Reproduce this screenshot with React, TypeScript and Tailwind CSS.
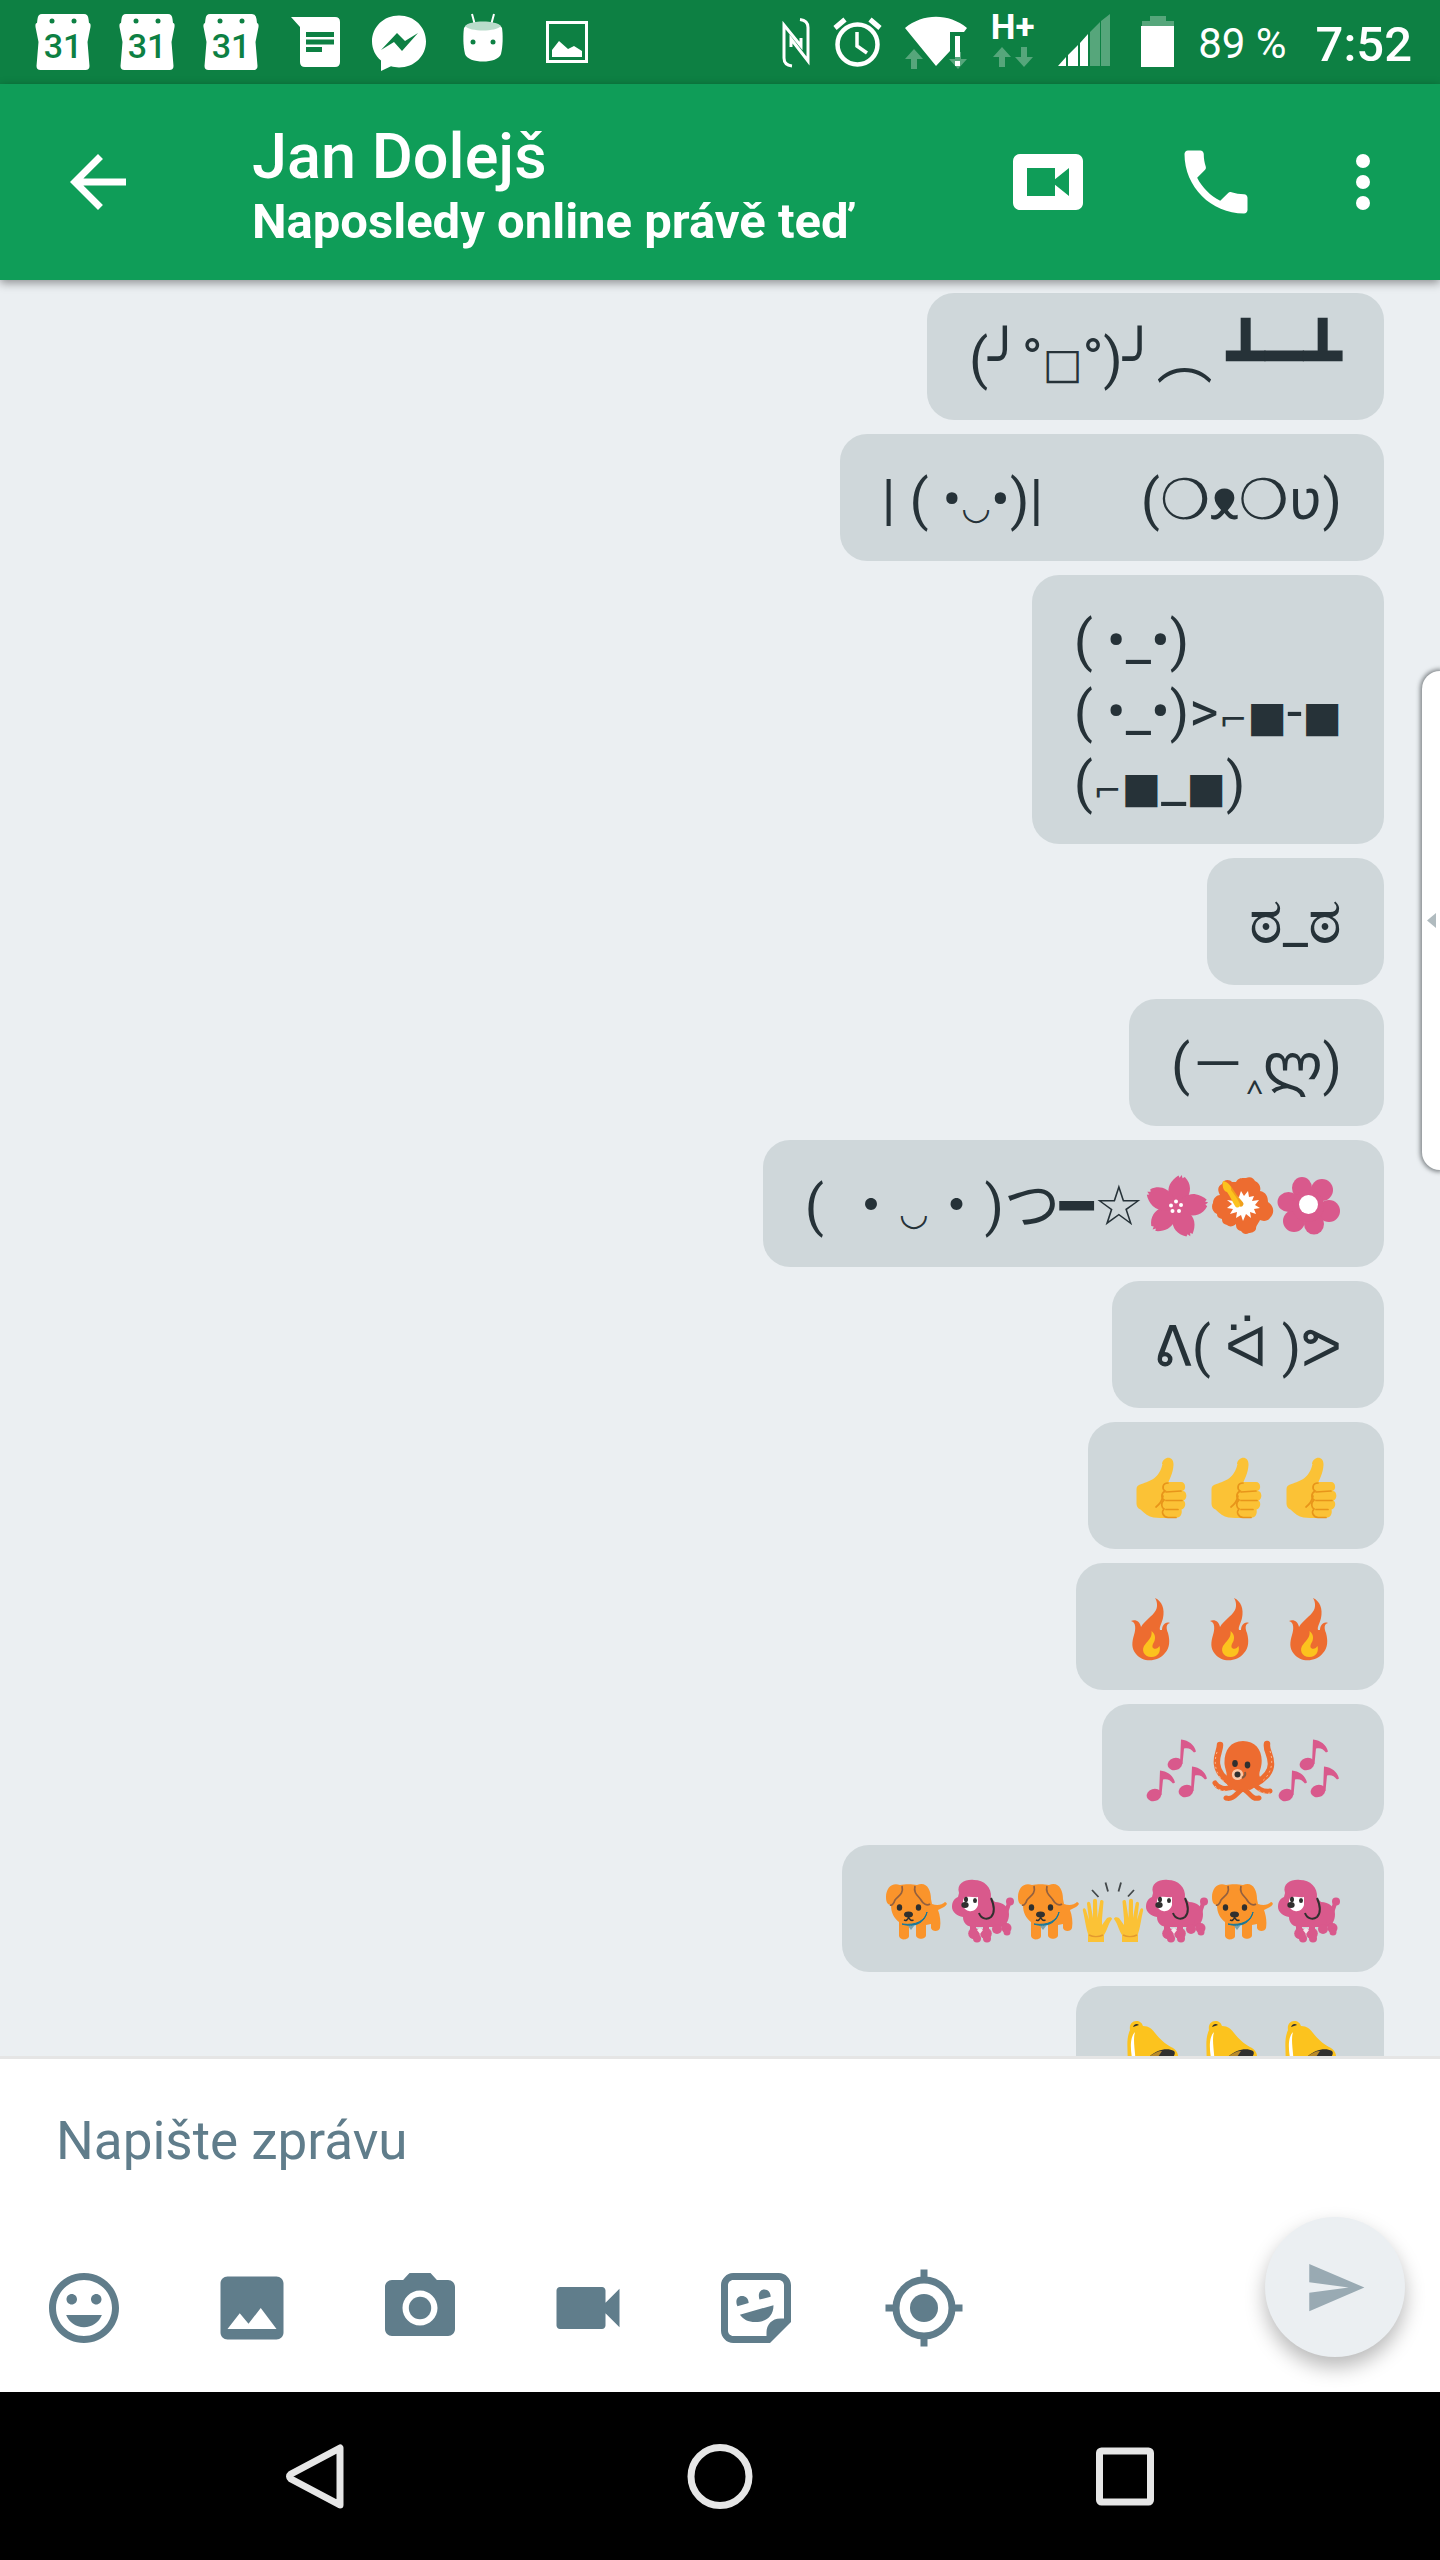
import type { ReactNode } from "react";

type GlyphProps = { label: string; children: ReactNode };

/* ---------- Emoji drawings ---------- */

function Emoji({ label, children }: GlyphProps) {
  return (
    <svg role="img" aria-label={label} viewBox="0 3 66 71" className="h-[71px] w-[66px] shrink-0 overflow-visible">
      {children}
    </svg>
  );
}

function HandEmoji({ label, children }: GlyphProps) {
  return (
    <svg role="img" aria-label={label} viewBox="0 3 62 71" className="h-[71px] w-[62px] shrink-0 overflow-visible">
      {children}
    </svg>
  );
}

function CherryBlossom() {
  return (
    <Emoji label="🌸">
      <g transform="translate(32 39)">
        {[10, 82, 154, 226, 298].map((a) => (
          <path
            key={a}
            transform={`rotate(${a})`}
            fill="#d9598c"
            d="M0 2C-8-4-12-14-10-21c1-4 4-8 7-10.500l1.500 2 1.500-3 1.500 3 2-1.500c4 3 6 6 7 10C12-14 8-4 0 2z"
          />
        ))}
      </g>
      <g fill="#fff">
        <circle cx="27" cy="37.500" r="2" />
        <circle cx="32" cy="33.500" r="2" />
        <circle cx="37" cy="37" r="2" />
        <circle cx="28.500" cy="43" r="2" />
        <circle cx="35" cy="43" r="2" />
      </g>
    </Emoji>
  );
}

function Hibiscus() {
  return (
    <Emoji label="🌺">
      <path
        fill="#ed6c30"
        d="M26 14c2-5 8-4 10-4 5-2 8 1 9 3 5 2 6 7 5 10 6 1 8 6 8 11 6 4 7 11 2 16-3 4-8 3-10 2-1 3-4 5-4 9-1 3-5 4-7 4-3 2-6 1-8-2-5-1-5-5-5-7-3 3-7 3-9 1-4-1-5-3-5-6-4-1-5-3-5-5-5-2-6-8-4-11 0-5 4-8 7-8-3-5-2-9 2-11 1-5 8-5 10-2h4z"
      />
      <path
        fill="#fff"
        d="M31 23l3 5 4-5 1 6 5-1-2 5 7-1-4 5 5 3-6 1 2 5-6-2 1 6-5-4-3 7-2-6-5 3 1-6-7 2 3-5-6-1 5-4-5-4 7 1-2-5 7 1z"
      />
      <path d="M19 20l6 9 6 7" fill="none" stroke="#f0a01c" strokeWidth="5" strokeLinecap="round" />
      <path d="M13 13c-1 4 0 10 4 11 3 4 5 9 8 14 2 3 6 1 5-2-3-6-6-10-9-14 1-4-3-8-8-9z" fill="#fcc31e" />
    </Emoji>
  );
}

function Blossom() {
  return (
    <Emoji label="🌼">
      <g fill="#d9598c">
        <ellipse cx="26" cy="20" rx="10" ry="11" />
        <ellipse cx="46" cy="22" rx="11" ry="11" />
        <ellipse cx="53" cy="43" rx="11" ry="11" />
        <ellipse cx="38" cy="56" rx="10" ry="10.500" />
        <ellipse cx="18" cy="53" rx="11" ry="11" />
        <ellipse cx="12.500" cy="34" rx="11" ry="10" />
        <circle cx="32" cy="38" r="16" />
      </g>
      <circle cx="32.500" cy="36.500" r="9.500" fill="#fff" />
    </Emoji>
  );
}

function ThumbsUp() {
  return (
    <HandEmoji label="👍">
      <path
        fill="#fbc236"
        d="M32 14c1-8 12-9 11.500 1C43 23 40 28 38.500 32H51c5 0 5.500 8 1.500 9 5 0 5 8.500 1 9.500 3 2 2 8-2 9 1 4-1 8-4 8-8 1-16 .500-24 0-5-1-9-4-13-8-3-1-4-4-4-6V39c0-3 2-4 5-5 9-3 18-6 21-20z"
      />
      <g fill="none" stroke="#e8951a" strokeWidth="1.700" strokeLinecap="round">
        <path d="M38 33c-6 0-6 6-3 8-5 3-3 8-1 9-4 3-2 8 0 9-3 3-1 8 4 8.500h8" />
        <path d="M36 42l15-1M36 50.500h16M36 59.500h12M33 46c-1 5-3 8-7 11" />
      </g>
    </HandEmoji>
  );
}

function Fire() {
  return (
    <Emoji label="🔥">
      <path
        fill="#ed6c30"
        d="M37 7c7 3 10 11 8 20-1 5-4 9-3 12h2c0-4 3-9 8-7-4 1-4 5-2 10 2 7 2 15-3 20-7 9-22 10-29 1-5-6-4-12-2-19 2-6 2-13-3-14 5-2 9 1 10 6 4-7 11-10 15-17 2-4 1-9-1-12z"
      />
      <path
        fill="#fcc31e"
        d="M33.500 40c4 3 4 7 3 10-1 2-3 5-1.500 7 3 2 5 0 6.500-2 1.500 5-1 11-8 11-8 0-11-8-6-13 3-4 7-7 6-13z"
      />
    </Emoji>
  );
}

function Notes() {
  return (
    <Emoji label="🎶">
      <g fill="#d9598c">
        {["translate(31 32)", "translate(10 63)", "translate(42 59)"].map((t) => (
          <g key={t} transform={t}>
            <ellipse rx="7.500" ry="6" transform="rotate(-18)" />
            <path d="M5 0L6-24.500c8 1 13 5 15 12l-2 1c-3-4-6-5-10-4L7.500 0z" />
          </g>
        ))}
      </g>
    </Emoji>
  );
}

function Octopus() {
  return (
    <Emoji label="🐙">
      <g fill="none" stroke="#ed6c30" strokeLinecap="round" strokeWidth="6.500">
        <path d="M10 13c0 6-4 10-3 19 1 9 7 15 16 20M57 12c-1 7 4 10 4 20 0 9-7 15-16 20" />
        <path d="M5 51c3 5 10 8 20 3M60 59c-6 1-11-1-16-7M16 66c7 2 10-4 15-8M49 66c-7 2-9-5-14-8" strokeWidth="5" />
      </g>
      <path
        fill="#ed6c30"
        d="M33 9c13 0 20 10 18.500 23-.5 6-3.500 9-1.500 13 1 6-4 10-10 13l-7-1-7 2c-7-3-12-8-10-13 2-5-1-8-1.500-14C14 19 20 9 33 9z"
      />
      <g fill="none" stroke="#fbb68f" strokeWidth="1" strokeDasharray="2 3">
        <path d="M7 20c-4 12-1 24 9 31M60 19c4 12 1 24-9 31M5 54c3 4 8 5 14 5M60 61c-4 1-8 0-12-3" />
      </g>
      <g fill="#30302f">
        <ellipse cx="25" cy="31.500" rx="2.800" ry="3.400" />
        <ellipse cx="37.500" cy="33" rx="2.800" ry="3.400" />
      </g>
      <circle cx="27.500" cy="42.500" r="5.600" fill="#fbc8a8" />
      <circle cx="27.500" cy="42.500" r="3" fill="#30302f" />
      <path d="M35 40c1 3-1 5-3 6" stroke="#85593f" strokeWidth="2" fill="none" />
    </Emoji>
  );
}

function Dog() {
  return (
    <Emoji label="🐕">
      <path
        fill="#fa942b"
        d="M2 24C2 15 8 9 16 12c5-1 12-1 17 0 9-4 14 4 14 14l1 5c5 2 10 1 13-2 3 1 2 3-1 5l-6 3c2 5 3 12 2 18-1 4-8 4-9 0v-4l-5 1v10c0 5-10 5-10 0V52h-7v11c0 4-9 5-10 0V49c-5-4-8-9-8-17-4 0-5-4-5-8z"
      />
      <g fill="none" stroke="#93603f" strokeWidth="1.700">
        <path d="M18 13c2 8-4 10-7 14-1 3-3 6-5 5M31 13c-2 8 4 10 6 14 2 4 6 6 9 4" />
      </g>
      <path d="M18 51c12 4 23-1 25-12-2 8-10 14-25 12z" fill="#15789c" stroke="#15789c" strokeWidth="1" />
      <path d="M24 53h6l-3 4z" fill="#7da0a8" />
      <g fill="#30302f">
        <ellipse cx="15.500" cy="34.500" rx="2.700" ry="3.300" />
        <ellipse cx="34.500" cy="34.500" rx="2.700" ry="3.300" />
        <ellipse cx="24.500" cy="41.500" rx="4.500" ry="3" />
      </g>
      <path d="M20 47c2 1 4 0 4.500-3 1 3 3 4 5 3" fill="none" stroke="#30302f" strokeWidth="1.500" />
    </Emoji>
  );
}

function Poodle() {
  return (
    <Emoji label="🐩">
      <g fill="#d9598c">
        <path d="M9 20C6 10 16 6 24 7c10 0 18 7 17 18l4 4c8 0 14 5 14 12 0 7-3 11-8 13H24c-7 0-11-4-11-10-6-1-11-5-11-10 0-6 3-9 6-10z" />
        <circle cx="60" cy="28.500" r="4" />
        <path d="M57 30l-3 8 4 2 3-9zM20 52h6v7h-6zM33 52h6v7h-6zM43 50h6v6h-6zM50 46h6l1 8h-5z" />
        <circle cx="24" cy="60.500" r="5.800" />
        <circle cx="36" cy="60.500" r="5.800" />
        <circle cx="27" cy="65.500" r="4" />
        <circle cx="37" cy="65.500" r="4" />
        <circle cx="47" cy="56" r="5" />
        <circle cx="56.500" cy="55" r="5" />
        <circle cx="57" cy="59" r="3.500" />
      </g>
      <path d="M30 55l-3 2 3 4 3-4z" fill="#f3e5ea" />
      <path d="M14 25c5-3 9 0 14-1v8c-1 4-5 7-9 6-5-1-8-6-5-13z" fill="#fff" />
      <g fill="#30302f">
        <ellipse cx="16" cy="26.500" rx="2" ry="2.800" />
        <ellipse cx="25" cy="27.500" rx="2" ry="2.500" />
        <ellipse cx="15" cy="32" rx="3.700" ry="3" />
      </g>
      <path d="M41 25c3 7 5 14 0 19-4 3-10 2-12-4" fill="none" stroke="#30302f" strokeWidth="2" />
    </Emoji>
  );
}

function RaisedHands() {
  const hand =
    "M6 69V61C4 55 3 47 1 38c-1-3 2-4 3-1l3 10-2-16c0-3 3-3 3.500 0L11 45V28c0-3 4-3 4 0l.500 17L18 29c0-3 4-2 3.500 0L20 46v6l5-7c2-1 5-1 5 1-4 5-5 12-8 16v7z";
  return (
    <HandEmoji label="🙌">
      <g fill="#fbc236">
        <path d={hand} />
        <path d={hand} transform="translate(62 0) scale(-1 1)" />
      </g>
      <path d="M7 62c4 2 10 2 14 0M41 62c4 2 10 2 14 0" stroke="#e39a2e" strokeWidth="1.500" fill="none" />
      <path d="M10 17l6.500 7M23.500 9.500l2.500 9M39 9.500l-2.500 9M52 17l-6 6.500" stroke="#43484a" strokeWidth="1.800" />
    </HandEmoji>
  );
}

function Bell() {
  return (
    <Emoji label="🔔">
      <path
        fill="#fcc31e"
        d="M12 16c-1-5 2-9 6-9s6 2 7 5c6 0 9 3 12 7 5 6 9 10 16 14 7 3 9 10 5 14-10 10-24 14-42 13-7-1-8-6-7-12 2-9-2-21 3-32z"
      />
      <path d="M17 18c-6 6-5 22 0 38 2-14-3-28 0-38z" fill="#fff" />
      <path d="M32 42c7-6 17-9 24-5 2 2 0 6-3 8-8 6-18 9-29 8z" fill="#30302f" />
      <path d="M32 42c4-3 8-5 12-5l-4 6z" fill="#b98a2a" />
      <path d="M15 13c1-3 4-4 6-2z" fill="#30302f" />
    </Emoji>
  );
}

/* ---------- Icons ---------- */

function MaterialIcon({ children, className = "size-[84px]" }: { children: ReactNode; className?: string }) {
  return (
    <svg viewBox="0 0 24 24" fill="currentColor" className={className} aria-hidden="true">
      {children}
    </svg>
  );
}

function StatusCell({ children }: { children: ReactNode }) {
  return (
    <svg viewBox="0 0 84 84" className="size-[84px] shrink-0 fill-white" aria-hidden="true">
      {children}
    </svg>
  );
}

function CalendarCell() {
  return (
    <StatusCell>
      <path d="M21 14h42q4 0 4.500 5l.500 4q2 0 1.500 4l-3 15 2 24q0 4-4 4h-45q-4 0-4-4l2-24-3-15q-.500-4 1.500-4l.500-4q.500-5 4.500-5z" />
      <circle cx="31" cy="21" r="2.500" fill="#0d8043" />
      <circle cx="53" cy="21" r="2.500" fill="#0d8043" />
      <text x="42" y="58" textAnchor="middle" fontSize="34" fontWeight="500" fill="#0d8043">
        31
      </text>
    </StatusCell>
  );
}

function StatusBar() {
  return (
    <div className="flex h-[84px] shrink-0 items-center justify-between bg-[#0d8043] pl-[21px] pr-7 text-white">
      <div className="flex">
        <CalendarCell />
        <CalendarCell />
        <CalendarCell />
        <StatusCell>
          <path d="M18 17h44q5 0 5 5v40q0 5-5 5H32q-5 0-5-5V27z" />
          <path d="M33 32h28v5H33zM33 39.500h28v5H33zM33 47h16v5H33z" fill="#0d8043" />
        </StatusCell>
        <StatusCell>
          <path d="M42 15.500c15.500 0 27 11.500 27 26s-11.500 26-27 26c-3 0-5.500-.5-8-1.200L24 71V60.500c-5.500-4.500-9-11.500-9-19 0-14.500 11.500-26 27-26z" />
          <path d="M24 50l16-17 8 8 13-8-16 18-8-9z" fill="#0d8043" />
        </StatusCell>
        <StatusCell>
          <path d="M31 14l3 11M53 14l-3 11" stroke="#fff" strokeWidth="2" />
          <path d="M23 28c4-8 34-8 38 0 1 7 1 18-1 26-3 10-33 10-36 0-2-8-2-19-1-26z" />
          <path d="M24 26c5-6 31-6 36 0-5 6-31 6-36 0z" fill="#b9dccb" />
          <circle cx="32" cy="42" r="2.500" fill="#0d8043" />
          <circle cx="52" cy="42" r="2.500" fill="#0d8043" />
        </StatusCell>
        <StatusCell>
          <path fillRule="evenodd" d="M21 21h42v42H21zM24 24v36h36V24z" />
          <path d="M27 50l7-9 9 8 6-3 8 5v6H27z" />
        </StatusCell>
      </div>

      <div className="flex items-center gap-[23px]">
        <svg viewBox="0 0 28 84" className="h-[84px] w-7" fill="none" stroke="#fff" strokeWidth="3" aria-hidden="true">
          <path d="M10 66q-8-1-8-8V25l17 21v-8M18 19.500q8 1 8 8V61L9 39v8" />
        </svg>
        <svg viewBox="0 0 49 84" className="h-[84px] w-[49px]" fill="none" stroke="#fff" aria-hidden="true">
          <circle cx="24.500" cy="44.500" r="20" strokeWidth="4.500" />
          <path d="M24 32v14l10 7" strokeWidth="3.500" />
          <path d="M2 28l10-8.500M47 28l-10-8.500" strokeWidth="5" />
        </svg>
        <svg viewBox="0 0 62 84" className="h-[84px] w-[62px]" fill="#fff" aria-hidden="true">
          <path d="M9 49l9 10h-6v10H6V59H0zM53 69l9-10h-6V52h-6v7h-6z" fill="#56a67b" />
          <path d="M0 28C18 13 44 13 62 28l-3 4H45v19L31 66z" />
          <path d="M50 36h5v21h-5zM50 61h5v5h-5z" />
        </svg>
        <div className="flex w-[45px] flex-col items-center gap-1 pb-1">
          <span className="text-[35px] font-bold leading-[30px]">H+</span>
          <svg viewBox="0 0 42 20" className="h-5 w-[42px] fill-[#56a67b]" aria-hidden="true">
            <path d="M10 0l9 10h-6v10H7V10H1zM32 20l9-10h-6V0h-6v10h-6z" />
          </svg>
        </div>
        <svg viewBox="0 0 52 84" className="h-[84px] w-[52px]" fill="#fff" aria-hidden="true">
          <path d="M0 66l8-9v9zM10 66V55l10-10v21zM22 66V43l8-9v32z" />
          <path d="M32 66V32l10-10v44zM43 66V21l9-7v52z" fill="#56a67b" />
        </svg>
        <svg viewBox="0 0 42 84" className="h-[84px] w-[42px]" fill="#fff" aria-hidden="true">
          <path d="M17 16h16v5h8v6H9v-6h8z" fill="#56a67b" />
          <path d="M8 26h33v41H8z" />
        </svg>
        <span className="pt-1 text-[42px] leading-none">89 %</span>
        <span className="pl-1.5 pt-1 text-[49px] font-medium leading-none">7:52</span>
      </div>
    </div>
  );
}

function AppBar() {
  return (
    <header className="relative z-10 flex h-[196px] shrink-0 items-center bg-[#0f9d58] pl-14 pr-[35px] text-white shadow-[0_3px_9px_rgba(0,0,0,0.4)]">
      <button type="button" aria-label="Zpět">
        <MaterialIcon>
          <path d="M20 11H7.830l5.590-5.590L12 4l-8 8 8 8 1.410-1.410L7.830 13H20v-2z" />
        </MaterialIcon>
      </button>
      <div className="min-w-0 flex-1 pl-28 pt-1.5">
        <h1 className="truncate text-[63px] font-medium leading-[74px]">Jan Dolejš</h1>
        <p className="truncate text-[49px] font-bold leading-[56px]">Naposledy online právě teď</p>
      </div>
      <div className="flex shrink-0">
        <button type="button" aria-label="Videohovor" className="mr-[84px]">
          <MaterialIcon>
            <path d="M20 4H4c-1.100 0-2 .9-2 2v12c0 1.100.9 2 2 2h16c1.100 0 2-.9 2-2V6c0-1.100-.9-2-2-2zm-2 12l-4-3.200V16H6V8h8v3.200L18 8v8z" />
          </MaterialIcon>
        </button>
        <button type="button" aria-label="Zavolat" className="mr-[63px]">
          <MaterialIcon>
            <path d="M6.620 10.790c1.440 2.830 3.760 5.140 6.590 6.590l2.200-2.200c.27-.27.67-.36 1.020-.24 1.120.37 2.330.57 3.570.57.55 0 1 .45 1 1V20c0 .55-.45 1-1 1-9.390 0-17-7.610-17-17 0-.55.45-1 1-1h3.500c.55 0 1 .45 1 1 0 1.250.2 2.450.57 3.570.11.35.03.74-.25 1.020l-2.200 2.200z" />
          </MaterialIcon>
        </button>
        <button type="button" aria-label="Další možnosti">
          <MaterialIcon>
            <circle cx="12" cy="6" r="2" />
            <circle cx="12" cy="12" r="2" />
            <circle cx="12" cy="18" r="2" />
          </MaterialIcon>
        </button>
      </div>
    </header>
  );
}

/* ---------- Conversation ---------- */

function Bubble({ children }: { children: ReactNode }) {
  return (
    <li className="flex shrink-0 whitespace-pre rounded-[27px] bg-[#cfd7da] px-[42px] pb-[25px] pt-[31px] text-[56px] leading-[71px] text-[#263238]">
      {children}
    </li>
  );
}

function Spaced({ children }: { children: ReactNode }) {
  return <div className="flex gap-[13px]">{children}</div>;
}

/* Symbols whose size differs from the letters around them. */
function Tiny({ children }: { children: ReactNode }) {
  return <span className="text-[34px] leading-none">{children}</span>;
}

function Small({ children }: { children: ReactNode }) {
  return <span className="text-[42px] leading-none">{children}</span>;
}

function Large({ children }: { children: ReactNode }) {
  return <span className="text-[64px] leading-none">{children}</span>;
}

function Conversation() {
  return (
    <main className="relative min-h-0 flex-1 overflow-hidden bg-[#ebeff2]">
      <ul className="flex flex-col items-end gap-3.5 pr-14 pt-[13px]">
        <Bubble>
          <p>
            (╯°<Small>□</Small>°)╯︵ <Large>┻━┻</Large>
          </p>
        </Bubble>
        <Bubble>
          <p>
            | ( •<Tiny>◡</Tiny>
            •)|{"\u3000   "}(❍ᴥ❍ʋ)
          </p>
        </Bubble>
        <Bubble>
          <p>
            {"( •_•)\n( •_•)>"}
            <Tiny>⌐</Tiny>
            <Small>■</Small>-<Small>■</Small>
            {"\n("}
            <Tiny>⌐</Tiny>
            <Small>■</Small>_<Small>■</Small>)
          </p>
        </Bubble>
        <Bubble>
          <p>
            <Large>ಠ</Large>_<Large>ಠ</Large>
          </p>
        </Bubble>
        <Bubble>
          <p>
            (－<Small>‸</Small>ლ)
          </p>
        </Bubble>
        <Bubble>
          <p>
            ({"\u2004"}・<Tiny>◡</Tiny>
            ・)つ━☆
          </p>
          <CherryBlossom />
          <Hibiscus />
          <Blossom />
        </Bubble>
        <Bubble>ᕕ( ᐛ )ᕗ</Bubble>
        <Bubble>
          <Spaced>
            <ThumbsUp />
            <ThumbsUp />
            <ThumbsUp />
          </Spaced>
        </Bubble>
        <Bubble>
          <Spaced>
            <Fire />
            <Fire />
            <Fire />
          </Spaced>
        </Bubble>
        <Bubble>
          <Notes />
          <Octopus />
          <Notes />
        </Bubble>
        <Bubble>
          <Dog />
          <Poodle />
          <Dog />
          <RaisedHands />
          <Poodle />
          <Dog />
          <Poodle />
        </Bubble>
        <Bubble>
          <Spaced>
            <Bell />
            <Bell />
            <Bell />
          </Spaced>
        </Bubble>
      </ul>
      <button
        type="button"
        aria-label="Otevřít panel"
        className="absolute right-0 top-[391px] flex h-[499px] w-[18px] items-center justify-end rounded-l-[18px] bg-white pr-1 shadow-[0_0_4px_2px_rgba(60,66,70,0.6)]"
      >
        <svg viewBox="0 0 9 15" className="h-[15px] w-[9px] shrink-0 fill-[#b0bbbf]" aria-hidden="true">
          <path d="M0 7.500L9 0v15z" />
        </svg>
      </button>
    </main>
  );
}

/* ---------- Composer ---------- */

function Composer() {
  return (
    <form
      className="flex shrink-0 flex-col border-t-[3px] border-[#e5e5e5] bg-white pt-[46px] text-[#607d8b]"
      onSubmit={(e) => e.preventDefault()}
    >
      <input
        type="text"
        aria-label="Napište zprávu"
        placeholder="Napište zprávu"
        className="mx-14 h-[72px] text-[53px] leading-[72px] outline-none placeholder:text-[#607d8b] placeholder:opacity-100"
      />
      <div className="flex items-start justify-between pb-[35px] pl-[42px] pr-[35px] pt-10">
        <div className="flex gap-[84px] pt-[49px]">
          <button type="button" aria-label="Emoji">
            <MaterialIcon>
              <path d="M11.990 2C6.470 2 2 6.480 2 12s4.470 10 9.990 10C17.520 22 22 17.520 22 12S17.520 2 11.990 2zM12 20c-4.420 0-8-3.580-8-8s3.580-8 8-8 8 3.580 8 8-3.580 8-8 8zm3.500-9c.83 0 1.500-.67 1.500-1.500S16.330 8 15.500 8 14 8.670 14 9.500s.67 1.500 1.500 1.500zm-7 0c.83 0 1.500-.67 1.500-1.500S9.330 8 8.500 8 7 8.670 7 9.500 7.670 11 8.500 11zM12 17.500c2.330 0 4.310-1.460 5.110-3.500H6.890c.8 2.040 2.780 3.500 5.110 3.500z" />
            </MaterialIcon>
          </button>
          <button type="button" aria-label="Obrázek">
            <MaterialIcon>
              <path
                fillRule="evenodd"
                d="M5 3h14c1.100 0 2 .9 2 2v14c0 1.100-.9 2-2 2H5c-1.100 0-2-.9-2-2V5c0-1.100.9-2 2-2zm0 15h14l-4.500-6-3.500 4.510-2.500-3.010z"
              />
            </MaterialIcon>
          </button>
          <button type="button" aria-label="Fotoaparát">
            <MaterialIcon>
              <circle cx="12" cy="12" r="3.200" />
              <path d="M9 2L7.170 4H4c-1.100 0-2 .9-2 2v12c0 1.100.9 2 2 2h16c1.100 0 2-.9 2-2V6c0-1.100-.9-2-2-2h-3.170L15 2H9zm3 15c-2.760 0-5-2.240-5-5s2.240-5 5-5 5 2.240 5 5-2.240 5-5 5z" />
            </MaterialIcon>
          </button>
          <button type="button" aria-label="Video">
            <MaterialIcon>
              <path d="M17 10.500V7c0-.55-.45-1-1-1H4c-.55 0-1 .45-1 1v10c0 .55.45 1 1 1h12c.55 0 1-.45 1-1v-3.500l4 4v-11l-4 4z" />
            </MaterialIcon>
          </button>
          <button type="button" aria-label="Nálepka">
            <MaterialIcon>
              <path
                fillRule="evenodd"
                d="M5.500 2h13C20.400 2 22 3.600 22 5.500V16l-6 6H5.500C3.600 22 2 20.400 2 18.500v-13C2 3.600 3.600 2 5.500 2zm0 2C4.700 4 4 4.700 4 5.500v13c0 .8.7 1.500 1.500 1.500H15v-1c0-2.200 1.500-4 4-4h1V5.500c0-.8-.7-1.500-1.500-1.500z"
              />
              <path d="M6.700 11.500c-.7-1.400-.2-2.900 1.300-2.900 1 0 1.900.7 1.900 2zM13 9.600c-.5-1.500 0-2.900 1.400-2.900 1.100 0 1.800.9 1.800 2.100zM7.400 13.900l9.600-2.700c0 3-1.900 4.800-5.200 4.800-2 0-3.500-.8-4.400-2.100z" />
            </MaterialIcon>
          </button>
          <button type="button" aria-label="Poloha">
            <MaterialIcon>
              <circle cx="12" cy="12" r="4" />
              <circle cx="12" cy="12" r="8" fill="none" stroke="currentColor" strokeWidth="2" />
              <path d="M11 1h2v3h-2zM11 20h2v3h-2zM1 11h3v2H1zM20 11h3v2h-3z" />
            </MaterialIcon>
          </button>
        </div>
        <button
          type="submit"
          aria-label="Odeslat"
          className="flex size-[140px] shrink-0 items-center justify-center rounded-full bg-[#ebeff2] text-[#99aab3] shadow-[0_10px_20px_rgba(0,0,0,0.28)]"
        >
          <MaterialIcon className="size-[63px]">
            <path d="M2.010 21L23 12 2.010 3 2 10l15 2-15 2z" />
          </MaterialIcon>
        </button>
      </div>
    </form>
  );
}

function NavButton({ label, children }: GlyphProps) {
  return (
    <button type="button" aria-label={label}>
      <svg viewBox="0 0 96 96" className="size-24" fill="none" stroke="currentColor" strokeWidth="7" strokeLinejoin="round">
        {children}
      </svg>
    </button>
  );
}

function SystemNav() {
  return (
    <nav className="flex h-[168px] shrink-0 items-center justify-center gap-[309px] bg-black text-[#e6e6e6]">
      <NavButton label="Zpět (systém)">
        <path d="M73 20v57L24 51q-3-2.500 0-5z" />
      </NavButton>
      <NavButton label="Domů">
        <circle cx="48" cy="48.500" r="29" />
      </NavButton>
      <NavButton label="Přehled">
        <rect x="22.500" y="23" width="51" height="51" rx="2" />
      </NavButton>
    </nav>
  );
}

export default function App() {
  return (
    <div className="flex h-screen flex-col overflow-hidden font-[Roboto,'Noto_Sans','DejaVu_Sans','Noto_Sans_CJK_JP',sans-serif]">
      <StatusBar />
      <AppBar />
      <Conversation />
      <Composer />
      <SystemNav />
    </div>
  );
}
